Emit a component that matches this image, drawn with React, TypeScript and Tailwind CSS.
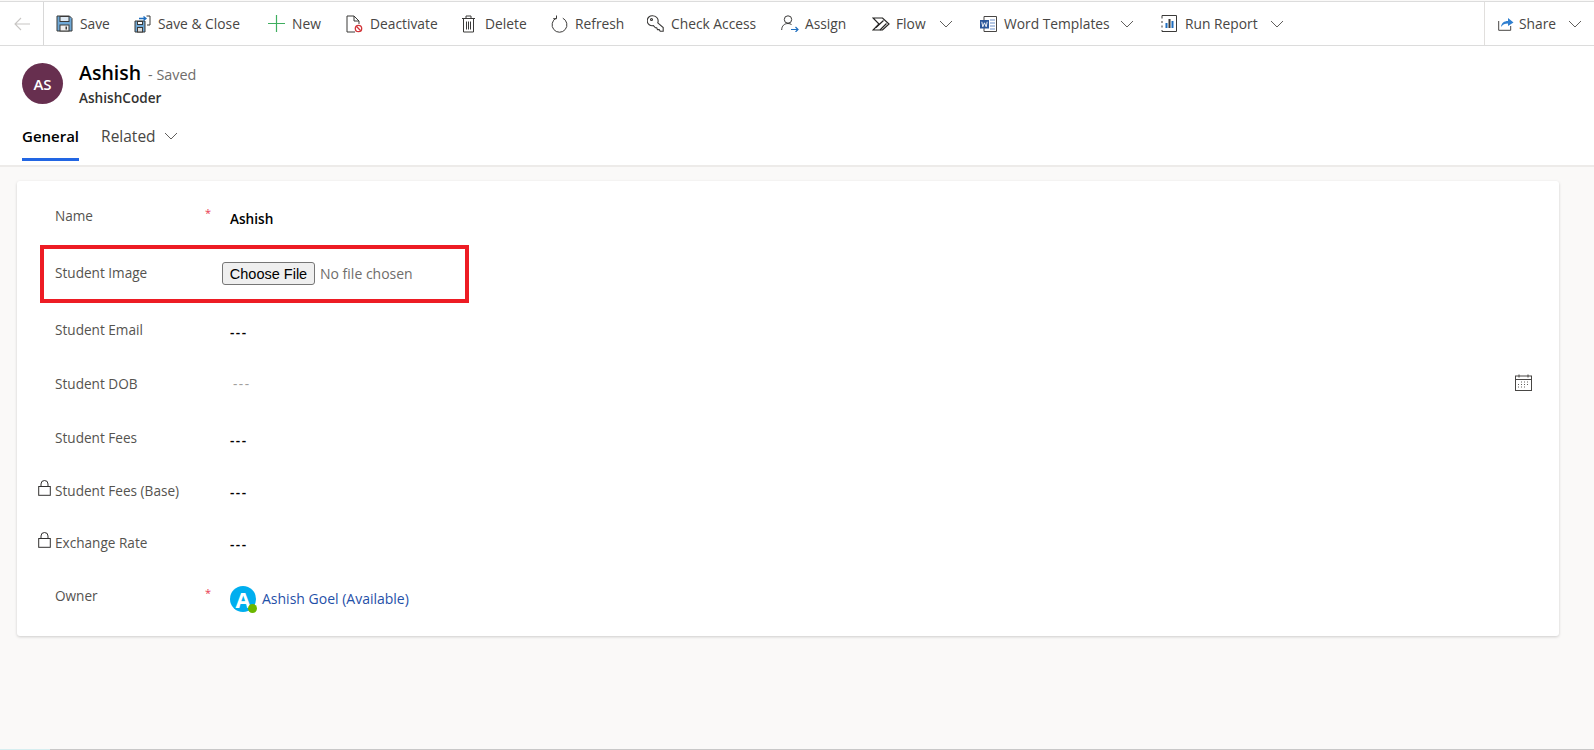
import type { ReactNode } from "react";

const stroke = "#3b3a39";

function Chevron({ className }: { className: string }) {
  return (
    <svg className={className} width="14" height="8" viewBox="0 0 14 8" fill="none" stroke="#605e5c" strokeWidth="1">
      <path d="M1 1l6 6 6-6" />
    </svg>
  );
}

const SaveIcon = (
  <svg width="17" height="17" viewBox="0 0 17 17">
    <path d="M1 1h12.500L16 3.500V16H1z" fill="#6fa8d6" stroke={stroke} />
    <rect x="4" y="1.500" width="9" height="5" fill="#dfeaf4" stroke={stroke} />
    <rect x="4" y="10" width="9" height="6" fill="#f0f0f0" stroke={stroke} />
    <rect x="9.500" y="11.500" width="1.500" height="3" fill={stroke} />
  </svg>
);

const SaveCloseIcon = (
  <svg width="17" height="18" viewBox="0 0 17 18">
    <path d="M1 6h10v11H1z" fill="#6fa8d6" stroke={stroke} />
    <rect x="3.500" y="6.500" width="5" height="3" fill="#fff" stroke={stroke} />
    <rect x="3.500" y="12.500" width="5" height="4.500" fill="#ddd" stroke={stroke} />
    <path d="M12.500 1H16v9h-3" fill="none" stroke={stroke} />
    <path d="M5 3.500h7M9.500 1.500l2.500 2-2.500 2" fill="none" stroke="#1f6fc0" strokeWidth="1.300" />
  </svg>
);

const PlusIcon = (
  <svg width="17" height="17" viewBox="0 0 17 17" stroke="#3fae5f" strokeWidth="1.200">
    <path d="M8.500 0v17M0 8.500h17" />
  </svg>
);

const DeactivateIcon = (
  <svg width="17" height="18" viewBox="0 0 17 18">
    <path d="M9 17H1V1h7l5 5v3M8 1v5h5" fill="none" stroke={stroke} />
    <circle cx="12.500" cy="13.500" r="3.200" fill="#fff" stroke="#d13438" strokeWidth="1.300" />
    <path d="M10.300 11.300l4.400 4.400" stroke="#d13438" strokeWidth="1.300" />
  </svg>
);

const DeleteIcon = (
  <svg width="15" height="18" viewBox="0 0 15 18" fill="none" stroke={stroke}>
    <path d="M1 3.500h13M5 3.500V1h5v2.500M2.500 3.500V17h10V3.500M5.500 6.500v8M7.500 6.500v8M9.500 6.500v8" />
  </svg>
);

const RefreshIcon = (
  <svg width="17" height="18" viewBox="0 0 17 18" fill="none" stroke={stroke}>
    <path d="M5.200 3.200a7.400 7.400 0 1 0 6.600 0" />
    <path d="M5.500 0.500v3.200H2.200" />
  </svg>
);

const KeyIcon = (
  <svg width="17" height="17" viewBox="0 0 17 17" fill="none" stroke={stroke} strokeWidth="1.100">
    <path d="M6 .8a5.200 5.200 0 0 1 4.800 7l5.400 4.700v3.700h-3l-1-1.600h-1.700l-.8-1.800H8.500L6.400 10.600A5 5 0 1 1 6 .8z" />
    <circle cx="4.500" cy="4.500" r="1" />
  </svg>
);

const AssignIcon = (
  <svg width="18" height="17" viewBox="0 0 18 17" fill="none">
    <circle cx="7" cy="4.500" r="3.700" stroke={stroke} />
    <path d="M0.700 15c0-4 2.500-6.500 6.300-6.500 1.400 0 2.600.4 3.500 1" stroke={stroke} />
    <path d="M10 14.500h7M14.500 12l2.500 2.500-2.500 2.500" stroke="#1f6fc0" strokeWidth="1.200" />
  </svg>
);

const FlowIcon = (
  <svg width="18" height="14" viewBox="0 0 18 14" fill="none" stroke="#252423" strokeWidth="1.200">
    <path d="M1 1h9.500l6.500 6-6.500 6H1l6-6z" />
    <path d="M4 10.500L11.500 3.500M8 13l6.500-6.500" />
  </svg>
);

const WordIcon = (
  <svg width="17" height="16" viewBox="0 0 17 16">
    <path d="M4 .5h12.500v15H4z" fill="#fff" stroke="#484644" />
    <path d="M10 4h5M10 7h5M10 10h5M10 13h5" stroke="#6b8fc9" />
    <rect x="0" y="4" width="9" height="8.500" fill="#2b579a" />
    <path d="M1.800 5.800l1 5 1.700-4 1.700 4 1-5" fill="none" stroke="#fff" strokeWidth=".9" />
  </svg>
);

const ReportIcon = (
  <svg width="16" height="17" viewBox="0 0 16 17" fill="none">
    <path d="M1 .5h14.500v16H1" stroke={stroke} />
    <path d="M1 .5v3M1 6v2M1 10.500v2M1 15v1.500" stroke={stroke} />
    <rect x="4.500" y="8" width="2" height="5" fill="#1f6fc0" />
    <rect x="7.500" y="4" width="2" height="9" fill={stroke} />
    <rect x="10.500" y="6" width="2" height="7" fill="#1f6fc0" />
  </svg>
);

const ShareIcon = (
  <svg width="16" height="15" viewBox="0 0 16 15" fill="none">
    <path d="M.7 5v9.300h12V10" stroke="#484644" />
    <path d="M3 11c.5-4 3-6 7-6V2l5.500 4.500L10 10V7.500C7 7.500 4.500 8.500 3 11z" fill="#2f7fd0" />
  </svg>
);

const CalendarIcon = (
  <svg width="17" height="17" viewBox="0 0 17 17" fill="none">
    <rect x=".5" y="2" width="16" height="14.500" stroke="#484644" />
    <path d="M.5 5.500h16" stroke="#484644" />
    <path d="M4 .5v3M13 .5v3" stroke="#484644" />
    <path d="M6 8h1M9 8h1M12 8h1M3 10.500h1M6 10.500h1M9 10.500h1M12 10.500h1M3 13h1M6 13h1M9 13h1" stroke="#605e5c" />
  </svg>
);

const LockIcon = (
  <svg width="13" height="16" viewBox="0 0 13 16" fill="none" stroke="#323130">
    <rect x=".7" y="6.500" width="11.600" height="8.800" />
    <path d="M3 6.500V4a3.500 3.500 0 0 1 7 0v2.500" />
  </svg>
);

type ToolItem = { icon: ReactNode; label: string; w: string; menu?: boolean };

const tools: ToolItem[] = [
  { icon: SaveIcon, label: "Save", w: "w-[30px]" },
  { icon: SaveCloseIcon, label: "Save & Close", w: "w-[86px]" },
  { icon: PlusIcon, label: "New", w: "w-[30px]" },
  { icon: DeactivateIcon, label: "Deactivate", w: "w-[67px]" },
  { icon: DeleteIcon, label: "Delete", w: "w-[42px]" },
  { icon: RefreshIcon, label: "Refresh", w: "w-[48px]" },
  { icon: KeyIcon, label: "Check Access", w: "w-[86px]" },
  { icon: AssignIcon, label: "Assign", w: "w-[43px]" },
  { icon: FlowIcon, label: "Flow", w: "w-[30px]", menu: true },
  { icon: WordIcon, label: "Word Templates", w: "w-[103px]", menu: true },
  { icon: ReportIcon, label: "Run Report", w: "w-[72px]", menu: true },
];

function Toolbar() {
  return (
    <div className="mt-px flex h-[45px] items-center border-y border-[#dcdcdc] bg-white text-[13.800px] text-[#484644]">
      <div className="flex h-full w-[44px] shrink-0 items-center justify-center border-r border-[#d8d8d8]">
        <svg width="16" height="14" viewBox="0 0 16 14" fill="none" stroke="#c8c6c4" strokeWidth="1.100">
          <path d="M16 7H1M7 1L1 7l6 6" />
        </svg>
      </div>
      <div className="ml-[12px] flex items-center gap-[24px]">
        {tools.map((t) => (
          <div key={t.label} className="flex items-center">
            <div className="w-[24px] shrink-0">{t.icon}</div>
            <span className={`whitespace-nowrap ${t.w}`}>{t.label}</span>
            {t.menu && <Chevron className="ml-[13px] mr-[3px]" />}
          </div>
        ))}
      </div>
      <div className="ml-auto flex h-full w-[110px] items-center border-l border-[#e1dfdd] pl-[13px]">
        <div className="w-[21px] shrink-0">{ShareIcon}</div>
        <span>Share</span>
        <Chevron className="ml-[12px]" />
      </div>
    </div>
  );
}

function Header() {
  return (
    <div className="h-[121px] border-b-2 border-[#edebe9] bg-white pl-[22px]">
      <div className="flex items-start pt-[17px]">
        <div className="flex h-[41px] w-[41px] items-center justify-center rounded-full bg-[#672f4f] text-[15px] font-semibold text-white">
          AS
        </div>
        <div className="ml-[16px]">
          <div className="flex items-baseline">
            <span className="text-[19.500px] font-semibold text-black">Ashish</span>
            <span className="ml-[7px] text-[14.400px] text-[#6f6d6b]">- Saved</span>
          </div>
          <div className="mt-[3px] font-semibold text-[#323130]">AshishCoder</div>
        </div>
      </div>
      <div className="mt-[18px] flex items-start">
        <div className="border-b-[3px] border-[#2266e3] pb-[12px] text-[15px] font-semibold text-black">General</div>
        <div className="ml-[22px] flex items-center text-[15.500px] text-[#484644]">
          Related
          <Chevron className="ml-[8px]" />
        </div>
      </div>
    </div>
  );
}

function Dashes({ muted }: { muted?: boolean }) {
  return <span className={muted ? "tracking-[1.500px] text-[#a19f9d]" : "font-semibold tracking-[1.500px] text-black"}>---</span>;
}

function Row(props: { label: string; h: string; pt: string; lock?: boolean; required?: boolean; children: ReactNode }) {
  return (
    <div className={`flex items-start ${props.h}`}>
      <div className="flex w-[17px] shrink-0 justify-start -mt-[1px]">{props.lock && LockIcon}</div>
      <div className="w-[150px] shrink-0 text-[#55534f]">{props.label}</div>
      <div className="w-[25px] shrink-0 text-[11px] leading-[14px] text-[#e8384f]">{props.required && "*"}</div>
      <div className={`flex flex-1 items-center ${props.pt}`}>{props.children}</div>
    </div>
  );
}

function Form() {
  return (
    <div className="relative ml-[17px] mt-[14px] h-[455px] w-[1542px] rounded-[3px] bg-white pt-[25px] pl-[21px] shadow-[0_1px_3px_rgba(0,0,0,0.18)]">
      <Row label="Name" required h="h-[57px]" pt="pt-[3px]">
        <span className="font-semibold text-black">Ashish</span>
      </Row>
      <Row label="Student Image" h="h-[57px]" pt="pt-[3px]">
        <button className="-mt-[4px] -ml-[8px] h-[23px] w-[93px] rounded-[3px] border border-[#767676] bg-[#efefef] font-['Liberation_Sans',sans-serif] text-[14.500px] text-black">
          Choose File
        </button>
        <span className="-mt-[4px] ml-[5px] text-[14px] text-[#6f6d6b]">No file chosen</span>
      </Row>
      <Row label="Student Email" h="h-[54px]" pt="pt-[2px]">
        <Dashes />
      </Row>
      <Row label="Student DOB" h="h-[54px]" pt="pt-0">
        <span className="ml-[3px]">
          <Dashes muted />
        </span>
        <span className="ml-auto mr-[27px] -mt-[3px]">{CalendarIcon}</span>
      </Row>
      <Row label="Student Fees" h="h-[53px]" pt="pt-[2px]">
        <Dashes />
      </Row>
      <Row label="Student Fees (Base)" lock h="h-[52px]" pt="pt-[1px]">
        <Dashes />
      </Row>
      <Row label="Exchange Rate" lock h="h-[53px]" pt="pt-[1px]">
        <Dashes />
      </Row>
      <Row label="Owner" required h="h-[40px]" pt="pt-0">
        <div className="relative flex h-[26px] w-[26px] items-center justify-center rounded-full bg-[#00aeef] text-[22px] font-bold leading-none text-white">
          A
          <span className="absolute -right-[1px] -bottom-[1px] h-[9px] w-[9px] rounded-full bg-[#6bb700]" />
        </div>
        <span className="ml-[6px] text-[14px] font-medium text-[#1f50a8]">Ashish Goel (Available)</span>
      </Row>
      <div className="absolute top-[64px] left-[23px] h-[58px] w-[429px] border-4 border-[#ed1c24]" />
    </div>
  );
}

export default function App() {
  return (
    <div className="flex h-[750px] w-[1594px] flex-col overflow-hidden bg-[#faf9f8] font-['Open_Sans',sans-serif] text-[13.600px] leading-[20px]">
      <Toolbar />
      <Header />
      <Form />
      <div className="mt-auto flex h-px">
        <div className="w-[50px] bg-[#d5eef0]" />
        <div className="flex-1 bg-[#c8c8c8]" />
      </div>
    </div>
  );
}
